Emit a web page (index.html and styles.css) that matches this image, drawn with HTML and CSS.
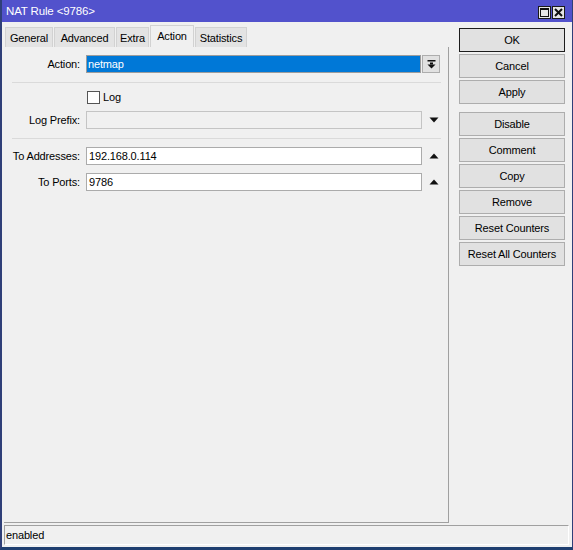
FILE: index.html
```html
<!DOCTYPE html>
<html>
<head>
<meta charset="utf-8">
<link rel="stylesheet" href="styles.css">
</head>
<body>
<div class="window">
  <div class="titlebar">
    <span class="title">NAT Rule &lt;9786&gt;</span>
    <div class="tbtns">
      <span class="tbtn"><svg width="11" height="11" viewBox="0 0 11 11"><rect x="1.5" y="1.5" width="8" height="8" fill="none" stroke="#111" stroke-width="1"/><rect x="1" y="1" width="9" height="2" fill="#111"/></svg></span>
      <span class="tbtn"><svg width="11" height="11" viewBox="0 0 11 11"><path d="M2 2 L9 9 M9 2 L2 9" stroke="#111" stroke-width="2"/></svg></span>
    </div>
  </div>
  <div class="main">
    <div class="left">
      <div class="tabs">
        <div class="tab t-general">General</div>
        <div class="tab t-advanced">Advanced</div>
        <div class="tab t-extra">Extra</div>
        <div class="tab t-action active">Action</div>
        <div class="tab t-stats">Statistics</div>
      </div>
      <div class="panel">
        <div class="row r-action">
          <span class="lbl">Action:</span>
          <div class="field sel-field"><span class="sel">netmap</span></div>
          <span class="ddbtn"><svg width="9" height="9" viewBox="0 0 9 9"><rect x="0.5" y="0" width="8" height="1.5" fill="#111"/><rect x="3" y="2.5" width="3" height="2" fill="#111"/><polygon points="0.5,4.5 8.5,4.5 4.5,8.5" fill="#111"/></svg></span>
        </div>
        <div class="sep sep1"></div>
        <div class="row r-log">
          <span class="lbl"></span>
          <span class="cb"></span>
          <span class="cbtext">Log</span>
        </div>
        <div class="row r-prefix">
          <span class="lbl">Log Prefix:</span>
          <div class="field disabled"></div>
          <span class="arrow"><svg width="10" height="6" viewBox="0 0 10 6"><polygon points="0.5,0.5 9.5,0.5 5,5.5" fill="#111"/></svg></span>
        </div>
        <div class="sep sep2"></div>
        <div class="row r-addr">
          <span class="lbl">To Addresses:</span>
          <div class="field">192.168.0.114</div>
          <span class="arrow"><svg width="10" height="6" viewBox="0 0 10 6"><polygon points="0.5,5.5 9.5,5.5 5,0.5" fill="#111"/></svg></span>
        </div>
        <div class="row r-ports">
          <span class="lbl">To Ports:</span>
          <div class="field">9786</div>
          <span class="arrow"><svg width="10" height="6" viewBox="0 0 10 6"><polygon points="0.5,5.5 9.5,5.5 5,0.5" fill="#111"/></svg></span>
        </div>
      </div>
    </div>
    <div class="buttons">
      <div class="btn default">OK</div>
      <div class="btn">Cancel</div>
      <div class="btn">Apply</div>
      <div class="btn gap-top">Disable</div>
      <div class="btn">Comment</div>
      <div class="btn">Copy</div>
      <div class="btn">Remove</div>
      <div class="btn">Reset Counters</div>
      <div class="btn">Reset All Counters</div>
    </div>
  </div>
  <div class="status">enabled</div>
</div>
</body>
</html>
```
FILE: styles.css
```css
html, body {
  margin: 0;
  padding: 0;
}
body {
  font-family: "Liberation Sans", Arial, sans-serif;
  font-size: 11px;
  letter-spacing: -0.15px;
  color: #000;
  background: #f0f0f0;
}
.window {
  width: 573px;
  height: 550px;
  box-sizing: border-box;
  display: flex;
  flex-direction: column;
  background: #f0f0f0;
  border-left: 2px solid #2f3f78;
  border-right: 1px solid #2f3f78;
  border-bottom: 3px solid #1f3f70;
}
.titlebar {
  height: 22px;
  flex: none;
  background: #5252cc;
  color: #fff;
  display: flex;
  align-items: center;
  padding-left: 4px;
}
.title {
  font-size: 11.5px;
}
.tbtns {
  margin-left: auto;
  display: flex;
  gap: 1px;
  padding-right: 7px;
  padding-top: 3px;
}
.tbtn {
  width: 13px;
  height: 13px;
  box-sizing: border-box;
  border: 1px solid #1a1a1a;
  background: #e6e6e6;
  display: flex;
  align-items: center;
  justify-content: center;
}
.tbtn svg {
  display: block;
}
.main {
  flex: 1;
  display: flex;
  min-height: 0;
}
.left {
  width: 447px;
  padding-left: 2px;
  box-sizing: border-box;
  display: flex;
  flex-direction: column;
}
.tabs {
  height: 25px;
  flex: none;
  display: flex;
  align-items: flex-end;
  padding-left: 1px;
  gap: 1px;
}
.tab {
  height: 20px;
  box-sizing: border-box;
  display: flex;
  align-items: center;
  justify-content: center;
  white-space: nowrap;
  background: #e3e3e3;
  border: 1px solid #d2d2d2;
  border-bottom: none;
}
.tab.active {
  height: 22px;
  background: #f0f0f0;
  padding-bottom: 2px;
}
.t-general { width: 48px; }
.t-advanced { width: 61px; }
.t-extra { width: 33px; }
.t-action { width: 44px; }
.t-stats { width: 52px; }
.panel {
  flex: 1;
  border-right: 1px solid #a0a0a0;
  border-bottom: 1px solid #a0a0a0;
  padding-top: 8px;
  display: flex;
  flex-direction: column;
}
.row {
  height: 18px;
  display: flex;
  align-items: center;
}
.lbl {
  width: 76px;
  text-align: right;
  margin-right: 6px;
  flex: none;
}
.field {
  width: 336px;
  height: 18px;
  box-sizing: border-box;
  border: 1px solid #ababab;
  background: #fff;
  padding-left: 2px;
  display: flex;
  align-items: center;
}
.field.disabled {
  background: #f0f0f0;
  border-color: #c4c4c4;
}
.sel-field {
  width: 335px;
  background: #0078d7;
  border-color: #9c9c9c;
  color: #fff;
  padding-left: 1px;
}
.ddbtn {
  width: 18px;
  height: 18px;
  box-sizing: border-box;
  margin-left: 1px;
  border: 1px solid #adadad;
  background: #e1e1e1;
  display: flex;
  align-items: center;
  justify-content: center;
}
.ddbtn svg, .arrow svg {
  display: block;
}
.arrow {
  margin-left: 7px;
  width: 10px;
  display: flex;
  align-items: center;
}
.sep {
  height: 1px;
  background: #dadada;
  margin-left: 8px;
  width: 429px;
}
.sep1 {
  margin-top: 9px;
  margin-bottom: 5px;
}
.r-prefix {
  margin-top: 5px;
}
.sep2 {
  margin-top: 9px;
  margin-bottom: 8px;
}
.r-ports {
  margin-top: 8px;
}
.cb {
  width: 13px;
  height: 13px;
  box-sizing: border-box;
  border: 1px solid #555;
  background: #fff;
  margin-left: 1px;
}
.cbtext {
  margin-left: 3px;
}
.buttons {
  margin-left: 10px;
  padding-top: 6px;
  display: flex;
  flex-direction: column;
  gap: 2px;
}
.btn {
  width: 106px;
  height: 24px;
  box-sizing: border-box;
  border: 1px solid #adadad;
  background: #e1e1e1;
  display: flex;
  align-items: center;
  justify-content: center;
}
.btn.default {
  border-color: #1c1c1c;
}
.btn.gap-top {
  margin-top: 6px;
}
.status {
  height: 20px;
  flex: none;
  box-sizing: border-box;
  margin: 2px 3px 2px 2px;
  border-top: 1px solid #a0a0a0;
  border-left: 1px solid #a0a0a0;
  border-right: 1px solid #fff;
  border-bottom: 1px solid #fff;
  padding-left: 1px;
  display: flex;
  align-items: center;
}
```
